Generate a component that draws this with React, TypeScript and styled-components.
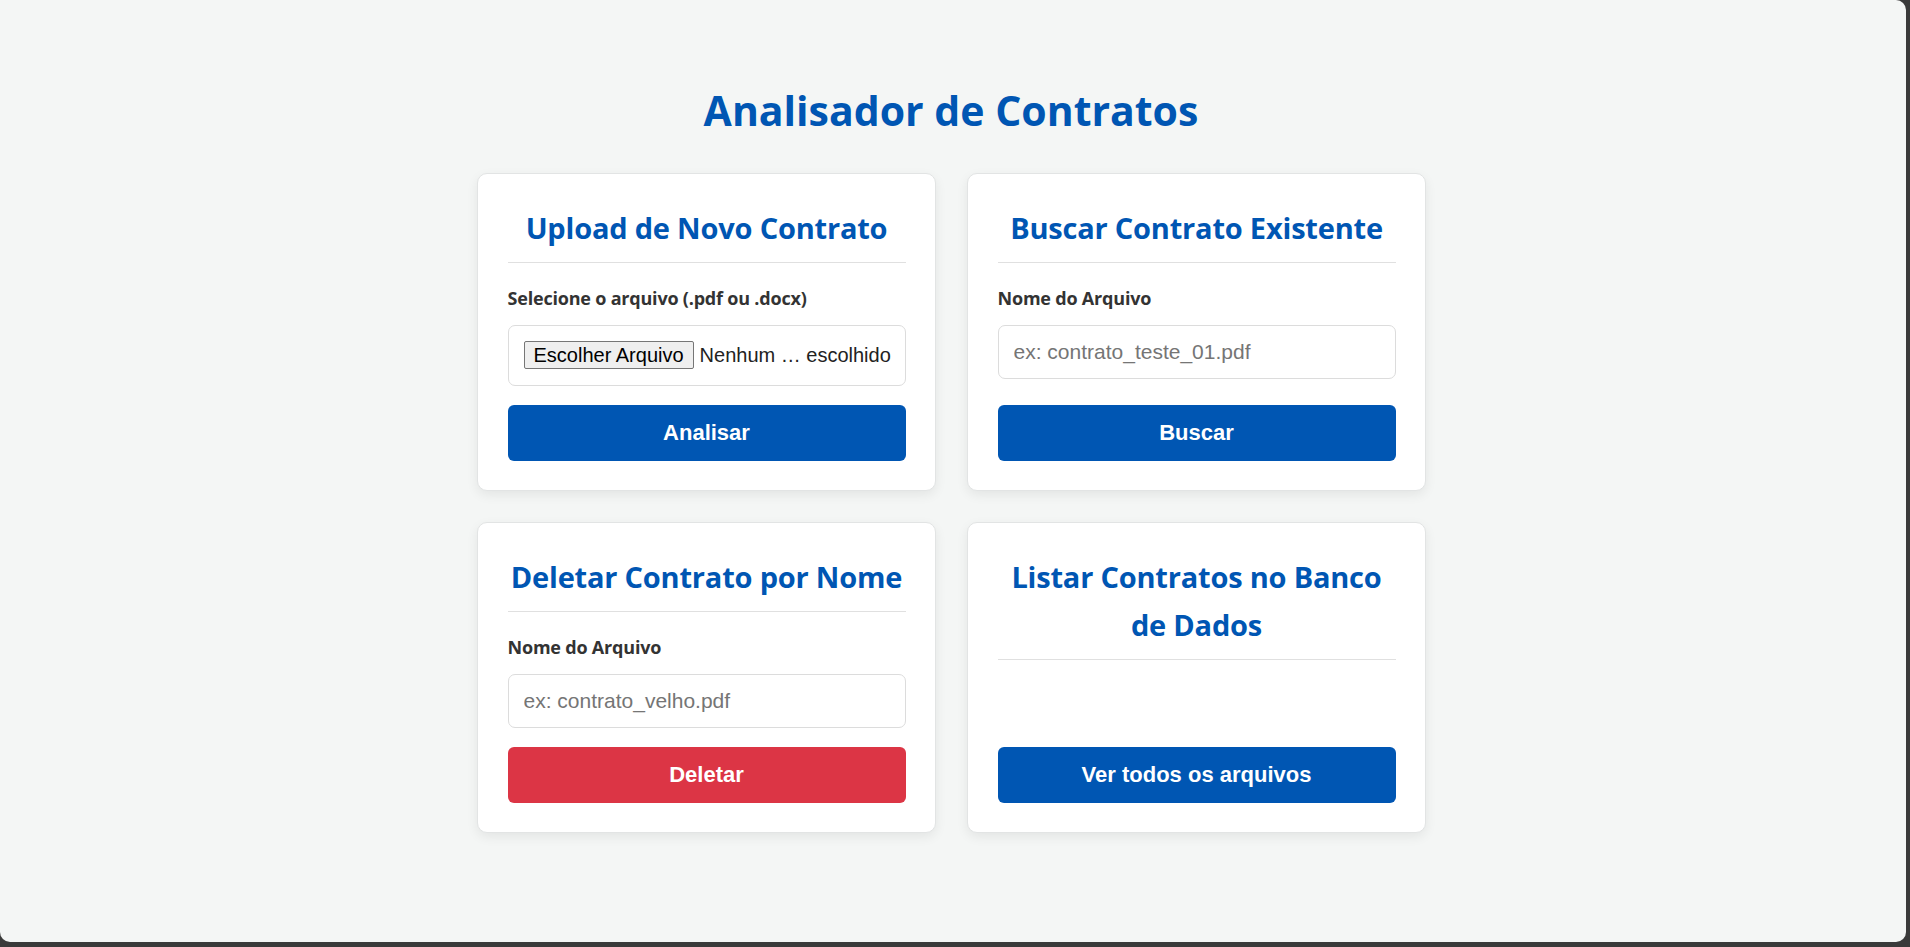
import React from 'react';
import styled, { createGlobalStyle } from 'styled-components';

const GlobalStyle = createGlobalStyle`
  * {
    box-sizing: border-box;
  }
  html, body {
    margin: 0;
    padding: 0;
    background: #3a3a3a;
  }
  body {
    font-family: 'Open Sans', 'Noto Sans', sans-serif;
    line-height: 1.6;
    color: #333;
  }
`;

const Page = styled.div`
  width: 1906px;
  height: 942px;
  background: #f4f6f5;
  border-radius: 0 10px 10px 10px;
  display: flex;
  flex-direction: column;
  align-items: center;
  padding: 78px 4px 0 0;
  overflow: hidden;
`;

const Title = styled.h1`
  margin: 0 0 29px;
  font-size: 41px;
  font-weight: 700;
  color: #0056b3;
  line-height: 1.6;
`;

const Grid = styled.div`
  display: grid;
  grid-template-columns: 459px 459px;
  gap: 31px 31px;
`;

const Card = styled.section`
  display: flex;
  flex-direction: column;
  background: #fff;
  border: 1px solid #e2e4e4;
  border-radius: 10px;
  padding: 29px 29px 29px 30px;
  box-shadow: 0 4px 12px rgba(0, 0, 0, 0.07);
`;

const CardTitle = styled.h2`
  margin: 0 0 20px;
  padding: 1px 0 10px;
  border-bottom: 1px solid #e0e0e0;
  font-size: 29px;
  font-weight: 700;
  letter-spacing: -0.2px;
  color: #0056b3;
  text-align: center;
  line-height: 48px;
`;

const Field = styled.div`
  margin-bottom: 19px;
`;

const Label = styled.label`
  display: block;
  margin-bottom: 12px;
  font-size: 18px;
  font-weight: 700;
  letter-spacing: -0.2px;
  color: #333;
  line-height: 30px;
`;

const TextInput = styled.input`
  display: block;
  width: 100%;
  height: 54px;
  padding: 0 15px;
  border: 1px solid #dcdcdc;
  border-radius: 7px;
  font-family: 'Liberation Sans', Arial, sans-serif;
  font-size: 21px;
  color: #333;
  background: #fff;
  outline: none;

  &::placeholder {
    color: #757575;
  }
`;

const FileBox = styled.label`
  display: flex;
  align-items: center;
  gap: 6px;
  height: 61px;
  padding: 0 15px;
  border: 1px solid #dcdcdc;
  border-radius: 7px;
  background: #fff;
  font-family: 'Liberation Sans', Arial, sans-serif;
  font-size: 20px;
  color: #222;
  cursor: pointer;
  white-space: nowrap;
`;

const FileButton = styled.span`
  display: inline-flex;
  align-items: center;
  height: 28px;
  padding: 0 9px;
  background: #efefef;
  border: 1px solid #767676;
  border-radius: 2px;
  color: #000;
  line-height: 1;
`;

const Button = styled.button<{ $danger?: boolean }>`
  margin-top: auto;
  width: 100%;
  height: 56px;
  border: none;
  border-radius: 6px;
  background: ${(p) => (p.$danger ? '#dc3545' : '#0056b3')};
  color: #fff;
  font-family: 'Liberation Sans', Arial, sans-serif;
  font-size: 22px;
  font-weight: 700;
  cursor: pointer;
`;

const Spacer = styled.div`
  height: 19px;
`;

const App = () => {
  return (
    <>
      <GlobalStyle />
      <Page>
        <Title>Analisador de Contratos</Title>
        <Grid>
          <Card>
            <CardTitle>Upload de Novo Contrato</CardTitle>
            <Field>
              <Label>Selecione o arquivo (.pdf ou .docx)</Label>
              <FileBox>
                <FileButton>Escolher Arquivo</FileButton>
                <span>Nenhum … escolhido</span>
              </FileBox>
            </Field>
            <Button>Analisar</Button>
          </Card>

          <Card>
            <CardTitle>Buscar Contrato Existente</CardTitle>
            <Field>
              <Label htmlFor="buscar">Nome do Arquivo</Label>
              <TextInput id="buscar" placeholder="ex: contrato_teste_01.pdf" />
            </Field>
            <Button>Buscar</Button>
          </Card>

          <Card>
            <CardTitle>Deletar Contrato por Nome</CardTitle>
            <Field>
              <Label htmlFor="deletar">Nome do Arquivo</Label>
              <TextInput id="deletar" placeholder="ex: contrato_velho.pdf" />
            </Field>
            <Button $danger>Deletar</Button>
          </Card>

          <Card>
            <CardTitle>Listar Contratos no Banco de Dados</CardTitle>
            <Spacer />
            <Button>Ver todos os arquivos</Button>
          </Card>
        </Grid>
      </Page>
    </>
  );
};

export default App;
